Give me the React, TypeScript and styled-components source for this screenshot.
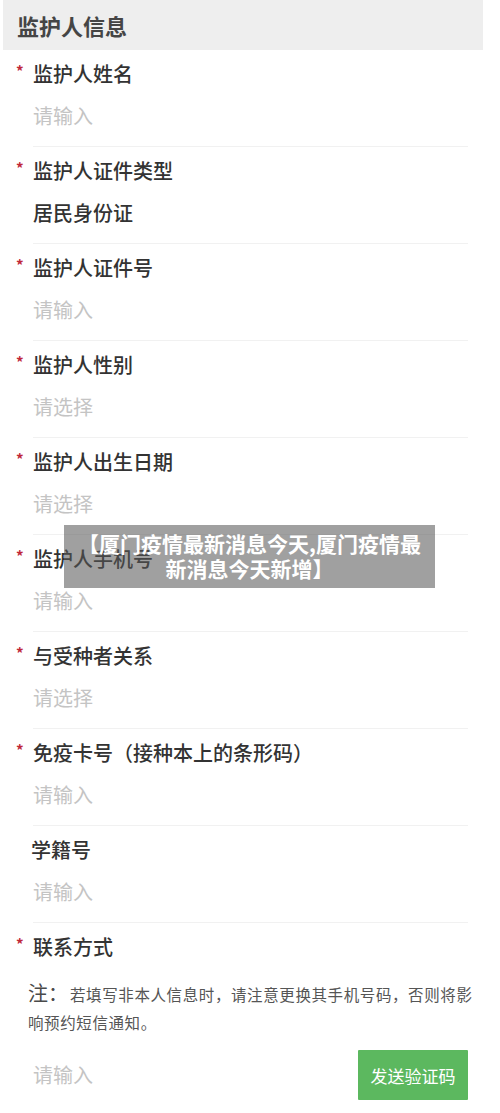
import * as React from 'react';
import styled, { createGlobalStyle } from 'styled-components';

const GlobalStyle = createGlobalStyle`
	html, body {
		margin: 0;
		padding: 0;
		background: #ffffff;
	}
	body {
		font-family: 'Noto Sans CJK SC', 'Noto Sans', sans-serif;
		color: #333333;
	}
`;

interface IField {
	label: string;
	value: string;
	required?: boolean;
	filled?: boolean;
}

const fields: IField[] = [
	{ label: '监护人姓名', value: '请输入', required: true },
	{ label: '监护人证件类型', value: '居民身份证', required: true, filled: true },
	{ label: '监护人证件号', value: '请输入', required: true },
	{ label: '监护人性别', value: '请选择', required: true },
	{ label: '监护人出生日期', value: '请选择', required: true },
	{ label: '监护人手机号', value: '请输入', required: true },
	{ label: '与受种者关系', value: '请选择', required: true },
	{ label: '免疫卡号（接种本上的条形码）', value: '请输入', required: true },
	{ label: '学籍号', value: '请输入' },
];

const App: React.FunctionComponent = () => {
	return (
		<Page>
			<GlobalStyle />
			<Header>
				<HeaderTitle>监护人信息</HeaderTitle>
			</Header>
			{fields.map(f => (
				<Field key={f.label}>
					<Star>{f.required ? '*' : ''}</Star>
					<FieldBody>
						<Label $plain={!f.required}>{f.label}</Label>
						<Value $filled={f.filled}>{f.value}</Value>
					</FieldBody>
				</Field>
			))}
			<Field>
				<Star>*</Star>
				<FieldBody $last>
					<Label>联系方式</Label>
					<Note>
						<NoteMark>注：</NoteMark>
						若填写非本人信息时，请注意更换其手机号码，否则将影响预约短信通知。
					</Note>
					<CodeRow>
						<Value>请输入</Value>
						<SendButton>发送验证码</SendButton>
					</CodeRow>
				</FieldBody>
			</Field>
			<Banner>【厦门疫情最新消息今天,厦门疫情最新消息今天新增】</Banner>
		</Page>
	);
};

export default App;

const Page = styled.div`
	position: relative;
	width: 500px;
	min-height: 1113px;
	overflow: hidden;
`;

const Header = styled.div`
	margin: 0 17px 0 3px;
	height: 50px;
	background: #eeeeee;
	display: flex;
	align-items: center;
	padding-left: 14px;
`;

const HeaderTitle = styled.div`
	font-size: 22px;
	font-weight: 600;
	color: #454545;
`;

const Field = styled.div`
	display: grid;
	grid-template-columns: 17px 1fr;
	padding: 0 32px 0 16px;
`;

const Star = styled.div`
	color: #c0283a;
	font-size: 15px;
	font-weight: 700;
	line-height: 1;
	padding-top: 13px;
`;

const FieldBody = styled.div<{ $last?: boolean }>`
	padding: 10px 0 ${p => (p.$last ? '0' : '16px')};
	border-bottom: ${p => (p.$last ? 'none' : '1px solid #f1f1f1')};
`;

const Label = styled.div<{ $plain?: boolean }>`
	font-size: 20px;
	font-weight: 500;
	line-height: 28px;
	color: #333333;
	margin-left: ${p => (p.$plain ? '-2px' : '0')};
`;

const Value = styled.div<{ $filled?: boolean }>`
	margin-top: 14px;
	font-size: 20px;
	font-weight: ${p => (p.$filled ? 500 : 400)};
	line-height: 28px;
	color: ${p => (p.$filled ? '#333333' : '#c4c4c4')};
`;

const Note = styled.div`
	margin: 18px -18px 0 -5px;
	font-size: 15.5px;
	line-height: 28px;
	color: #555555;
	letter-spacing: 0.6px;
`;

const NoteMark = styled.span`
	font-size: 20px;
	letter-spacing: 0;
	margin-right: 2px;
	color: #4a4a4a;
`;

const CodeRow = styled.div`
	display: flex;
	align-items: center;
	justify-content: space-between;
	margin-top: 14px;

	${Value} {
		margin-top: 0;
	}
`;

const SendButton = styled.button`
	width: 110px;
	height: 50px;
	border: none;
	border-radius: 1px;
	background: #5cb85f;
	color: #ffffff;
	font-family: 'Noto Sans CJK SC', sans-serif;
	font-size: 17px;
	padding: 0;
`;

const Banner = styled.div`
	position: absolute;
	left: 64px;
	top: 525px;
	width: 371px;
	height: 63px;
	box-sizing: border-box;
	padding: 6px 10px;
	background: rgba(85, 85, 85, 0.56);
	color: #ffffff;
	font-size: 21px;
	font-weight: 700;
	line-height: 25px;
	text-align: center;
`;
